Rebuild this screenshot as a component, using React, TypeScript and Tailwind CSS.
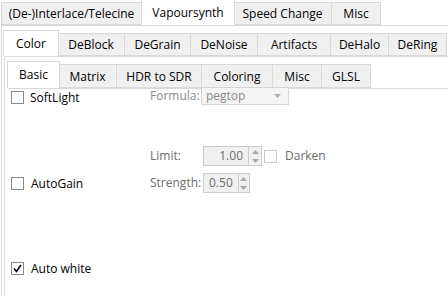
import React from 'react';

type Tab = { label: string; w: number };

function TabBar({ tabs, active, h }: { tabs: Tab[]; active: number; h: number }) {
  return (
    <div className="flex items-end" style={{ height: h }}>
      {tabs.map((t, i) =>
        i === active ? (
          <div
            key={t.label}
            className="relative z-10 -mx-px flex items-center justify-center border border-b-0 border-[#d9d9d9] bg-white text-black"
            style={{ width: t.w + 2, height: h + 1 }}
          >
            {t.label}
          </div>
        ) : (
          <div
            key={t.label}
            className="flex h-[calc(100%-2px)] items-center justify-center border border-l-0 border-[#d9d9d9] bg-[#f0f0f0] pt-px text-black first:border-l"
            style={{ width: t.w }}
          >
            {t.label}
          </div>
        )
      )}
    </div>
  );
}

function Check({ checked, disabled }: { checked?: boolean; disabled?: boolean }) {
  return (
    <div
      className={`flex h-[13px] w-[13px] items-center justify-center border bg-white ${
        disabled ? 'border-[#cccccc]' : 'border-[#8a8a8a]'
      }`}
    >
      {checked && (
        <svg width="9" height="9" viewBox="0 0 9 9">
          <path d="M1 4.5 L3.5 7.5 L8 1" fill="none" stroke="#000" strokeWidth="1.6" />
        </svg>
      )}
    </div>
  );
}

function Spin({ value, w, right }: { value: string; w: number; right?: boolean }) {
  return (
    <div
      className="flex h-[20px] items-stretch border border-[#cccccc] bg-[#f0f0f0] text-[#6d6d6d]"
      style={{ width: w }}
    >
      <div className={`flex flex-1 items-center px-[5px] ${right ? 'justify-end' : 'justify-start'}`}>{value}</div>
      <div className="flex w-[13px] flex-col border-l border-[#cccccc]">
        <div className="flex flex-1 items-center justify-center">
          <svg width="7" height="4" viewBox="0 0 7 4">
            <path d="M0 4 L3.5 0 L7 4 Z" fill="#a8a8a8" />
          </svg>
        </div>
        <div className="flex flex-1 items-center justify-center">
          <svg width="7" height="4" viewBox="0 0 7 4">
            <path d="M0 0 L3.5 4 L7 0 Z" fill="#a8a8a8" />
          </svg>
        </div>
      </div>
    </div>
  );
}

export default function App() {
  const top: Tab[] = [
    { label: '(De-)Interlace/Telecine', w: 141 },
    { label: 'Vapoursynth', w: 92 },
    { label: 'Speed Change', w: 98 },
    { label: 'Misc', w: 49 },
  ];
  const mid: Tab[] = [
    { label: 'Color', w: 54 },
    { label: 'DeBlock', w: 67 },
    { label: 'DeGrain', w: 66 },
    { label: 'DeNoise', w: 67 },
    { label: 'Artifacts', w: 73 },
    { label: 'DeHalo', w: 58 },
    { label: 'DeRing', w: 58 },
  ];
  const sub: Tab[] = [
    { label: 'Basic', w: 51 },
    { label: 'Matrix', w: 58 },
    { label: 'HDR to SDR', w: 85 },
    { label: 'Coloring', w: 71 },
    { label: 'Misc', w: 49 },
    { label: 'GLSL', w: 49 },
  ];

  return (
    <div
      className="h-[296px] w-[448px] overflow-hidden bg-white text-[12px] leading-none"
      style={{ fontFamily: '"Open Sans", "Noto Sans", sans-serif' }}
    >
      <div className="pl-px">
        <TabBar tabs={top} active={1} h={25} />
      </div>
      <div className="ml-px h-[271px] border-l border-t border-[#d9d9d9] pl-[2px] pt-[5px]">
        <TabBar tabs={mid} active={0} h={25} />
        <div className="h-[240px] border-l border-t border-[#d9d9d9] pl-[3px] pt-[5px]">
          <TabBar tabs={sub} active={0} h={26} />
          <div className="h-[210px] border-t border-[#d9d9d9] pl-[3px]">
            <div className="-mt-[2px] flex h-[18px] items-center">
              <div className="flex w-[139px] items-center gap-[6px] pt-[3px]">
                <Check />
                <span>SoftLight</span>
              </div>
              <span className="w-[51px] text-[#8a8a8a]">Formula:</span>
              <div className="relative z-20 flex h-[18px] w-[88px] items-center justify-between border border-[#d4d4d4] bg-[#f4f4f4] px-[4px] text-[#8a8a8a]">
                <span>pegtop</span>
                <svg width="7" height="4" viewBox="0 0 7 4" className="mr-[3px]">
                  <path d="M0 0 L3.5 4 L7 0 Z" fill="#b0b0b0" />
                </svg>
              </div>
            </div>
            <div className="mt-[41px] flex h-[20px] items-center">
              <div className="w-[139px]" />
              <span className="w-[53px] text-[#6d6d6d]">Limit:</span>
              <Spin value="1.00" w={59} right />
              <div className="ml-[2px] flex items-center gap-[8px]">
                <Check disabled />
                <span className="text-[#6d6d6d]">Darken</span>
              </div>
            </div>
            <div className="mt-[7px] flex h-[20px] items-center">
              <div className="flex w-[139px] items-center gap-[7px] pt-px">
                <Check />
                <span>AutoGain</span>
              </div>
              <span className="w-[53px] text-[#6d6d6d]">Strength:</span>
              <Spin value="0.50" w={47} />
            </div>
            <div className="mt-[69px] flex items-center gap-[7px]">
              <Check checked />
              <span>Auto white</span>
            </div>
          </div>
        </div>
      </div>
    </div>
  );
}
